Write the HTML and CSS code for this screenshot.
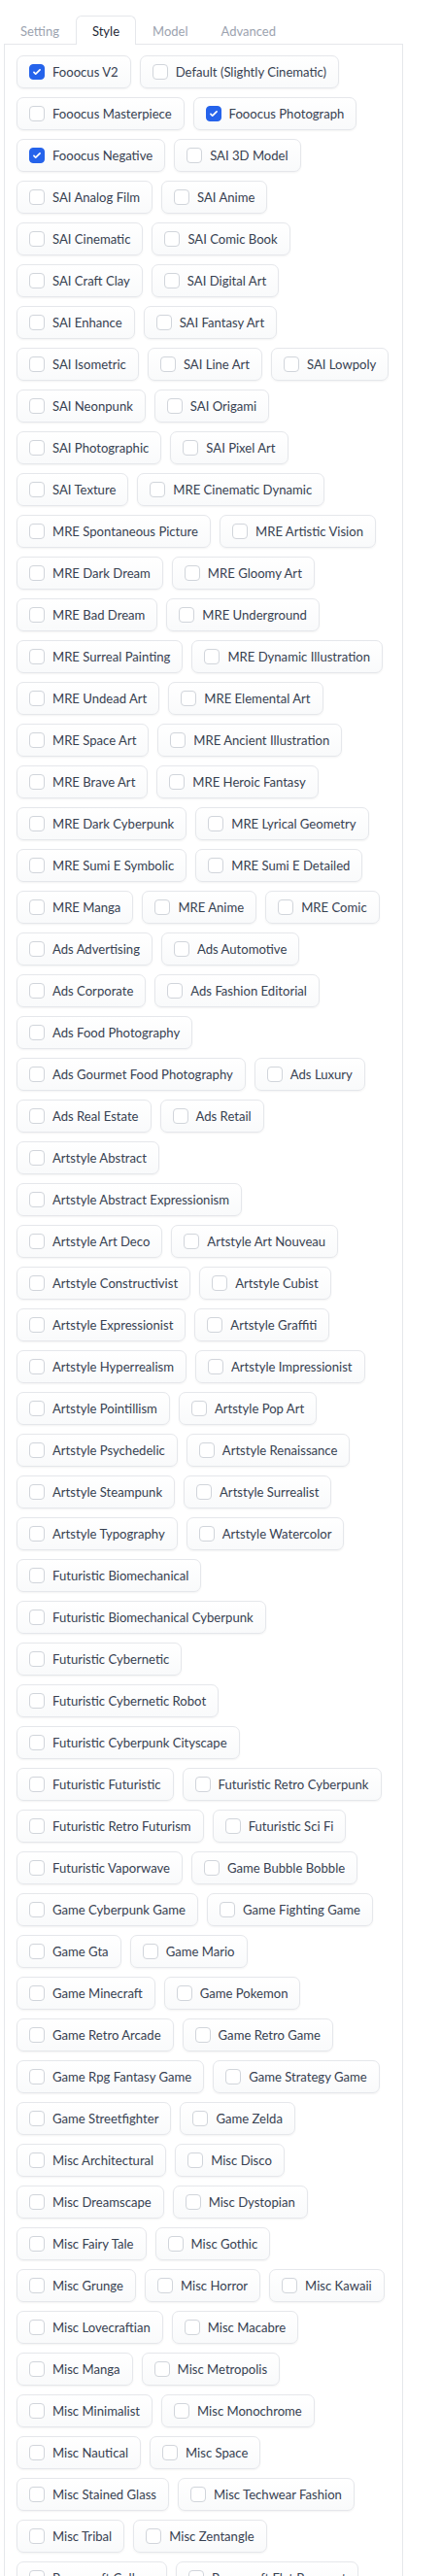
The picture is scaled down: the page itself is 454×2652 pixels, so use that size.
FILE: index.html
```html
<!DOCTYPE html>
<html lang="en">
<head>
<meta charset="utf-8">
<title>Style</title>
<link rel="stylesheet" href="styles.css">
</head>
<body>
<div class="wrap">
  <div class="tabs">
    <button class="tab">Setting</button>
    <button class="tab active">Style</button>
    <button class="tab">Model</button>
    <button class="tab">Advanced</button>
  </div>
  <div class="panel">
    <div class="row">
      <label class="opt"><span class="box on"><svg viewBox="0 0 16 16"><path d="M12.207 4.793a1 1 0 010 1.414l-5 5a1 1 0 01-1.414 0l-2-2a1 1 0 011.414-1.414L6.5 9.086l4.293-4.293a1 1 0 011.414 0z"/></svg></span><span class="txt">Fooocus V2</span></label>
      <label class="opt"><span class="box"></span><span class="txt">Default (Slightly Cinematic)</span></label>
    </div>
    <div class="row">
      <label class="opt"><span class="box"></span><span class="txt">Fooocus Masterpiece</span></label>
      <label class="opt"><span class="box on"><svg viewBox="0 0 16 16"><path d="M12.207 4.793a1 1 0 010 1.414l-5 5a1 1 0 01-1.414 0l-2-2a1 1 0 011.414-1.414L6.5 9.086l4.293-4.293a1 1 0 011.414 0z"/></svg></span><span class="txt">Fooocus Photograph</span></label>
    </div>
    <div class="row">
      <label class="opt"><span class="box on"><svg viewBox="0 0 16 16"><path d="M12.207 4.793a1 1 0 010 1.414l-5 5a1 1 0 01-1.414 0l-2-2a1 1 0 011.414-1.414L6.5 9.086l4.293-4.293a1 1 0 011.414 0z"/></svg></span><span class="txt">Fooocus Negative</span></label>
      <label class="opt"><span class="box"></span><span class="txt">SAI 3D Model</span></label>
    </div>
    <div class="row"><label class="opt"><span class="box"></span><span class="txt">SAI Analog Film</span></label><label class="opt"><span class="box"></span><span class="txt">SAI Anime</span></label></div>
    <div class="row"><label class="opt"><span class="box"></span><span class="txt">SAI Cinematic</span></label><label class="opt"><span class="box"></span><span class="txt">SAI Comic Book</span></label></div>
    <div class="row"><label class="opt"><span class="box"></span><span class="txt">SAI Craft Clay</span></label><label class="opt"><span class="box"></span><span class="txt">SAI Digital Art</span></label></div>
    <div class="row"><label class="opt"><span class="box"></span><span class="txt">SAI Enhance</span></label><label class="opt"><span class="box"></span><span class="txt">SAI Fantasy Art</span></label></div>
    <div class="row"><label class="opt"><span class="box"></span><span class="txt">SAI Isometric</span></label><label class="opt"><span class="box"></span><span class="txt">SAI Line Art</span></label><label class="opt"><span class="box"></span><span class="txt">SAI Lowpoly</span></label></div>
    <div class="row"><label class="opt"><span class="box"></span><span class="txt">SAI Neonpunk</span></label><label class="opt"><span class="box"></span><span class="txt">SAI Origami</span></label></div>
    <div class="row"><label class="opt"><span class="box"></span><span class="txt">SAI Photographic</span></label><label class="opt"><span class="box"></span><span class="txt">SAI Pixel Art</span></label></div>
    <div class="row"><label class="opt"><span class="box"></span><span class="txt">SAI Texture</span></label><label class="opt"><span class="box"></span><span class="txt">MRE Cinematic Dynamic</span></label></div>
    <div class="row"><label class="opt"><span class="box"></span><span class="txt">MRE Spontaneous Picture</span></label><label class="opt"><span class="box"></span><span class="txt">MRE Artistic Vision</span></label></div>
    <div class="row"><label class="opt"><span class="box"></span><span class="txt">MRE Dark Dream</span></label><label class="opt"><span class="box"></span><span class="txt">MRE Gloomy Art</span></label></div>
    <div class="row"><label class="opt"><span class="box"></span><span class="txt">MRE Bad Dream</span></label><label class="opt"><span class="box"></span><span class="txt">MRE Underground</span></label></div>
    <div class="row"><label class="opt"><span class="box"></span><span class="txt">MRE Surreal Painting</span></label><label class="opt"><span class="box"></span><span class="txt">MRE Dynamic Illustration</span></label></div>
    <div class="row"><label class="opt"><span class="box"></span><span class="txt">MRE Undead Art</span></label><label class="opt"><span class="box"></span><span class="txt">MRE Elemental Art</span></label></div>
    <div class="row"><label class="opt"><span class="box"></span><span class="txt">MRE Space Art</span></label><label class="opt"><span class="box"></span><span class="txt">MRE Ancient Illustration</span></label></div>
    <div class="row"><label class="opt"><span class="box"></span><span class="txt">MRE Brave Art</span></label><label class="opt"><span class="box"></span><span class="txt">MRE Heroic Fantasy</span></label></div>
    <div class="row"><label class="opt"><span class="box"></span><span class="txt">MRE Dark Cyberpunk</span></label><label class="opt"><span class="box"></span><span class="txt">MRE Lyrical Geometry</span></label></div>
    <div class="row"><label class="opt"><span class="box"></span><span class="txt">MRE Sumi E Symbolic</span></label><label class="opt"><span class="box"></span><span class="txt">MRE Sumi E Detailed</span></label></div>
    <div class="row"><label class="opt"><span class="box"></span><span class="txt">MRE Manga</span></label><label class="opt"><span class="box"></span><span class="txt">MRE Anime</span></label><label class="opt"><span class="box"></span><span class="txt">MRE Comic</span></label></div>
    <div class="row"><label class="opt"><span class="box"></span><span class="txt">Ads Advertising</span></label><label class="opt"><span class="box"></span><span class="txt">Ads Automotive</span></label></div>
    <div class="row"><label class="opt"><span class="box"></span><span class="txt">Ads Corporate</span></label><label class="opt"><span class="box"></span><span class="txt">Ads Fashion Editorial</span></label></div>
    <div class="row"><label class="opt"><span class="box"></span><span class="txt">Ads Food Photography</span></label></div>
    <div class="row"><label class="opt"><span class="box"></span><span class="txt">Ads Gourmet Food Photography</span></label><label class="opt"><span class="box"></span><span class="txt">Ads Luxury</span></label></div>
    <div class="row"><label class="opt"><span class="box"></span><span class="txt">Ads Real Estate</span></label><label class="opt"><span class="box"></span><span class="txt">Ads Retail</span></label></div>
    <div class="row"><label class="opt"><span class="box"></span><span class="txt">Artstyle Abstract</span></label></div>
    <div class="row"><label class="opt"><span class="box"></span><span class="txt">Artstyle Abstract Expressionism</span></label></div>
    <div class="row"><label class="opt"><span class="box"></span><span class="txt">Artstyle Art Deco</span></label><label class="opt"><span class="box"></span><span class="txt">Artstyle Art Nouveau</span></label></div>
    <div class="row"><label class="opt"><span class="box"></span><span class="txt">Artstyle Constructivist</span></label><label class="opt"><span class="box"></span><span class="txt">Artstyle Cubist</span></label></div>
    <div class="row"><label class="opt"><span class="box"></span><span class="txt">Artstyle Expressionist</span></label><label class="opt"><span class="box"></span><span class="txt">Artstyle Graffiti</span></label></div>
    <div class="row"><label class="opt"><span class="box"></span><span class="txt">Artstyle Hyperrealism</span></label><label class="opt"><span class="box"></span><span class="txt">Artstyle Impressionist</span></label></div>
    <div class="row"><label class="opt"><span class="box"></span><span class="txt">Artstyle Pointillism</span></label><label class="opt"><span class="box"></span><span class="txt">Artstyle Pop Art</span></label></div>
    <div class="row"><label class="opt"><span class="box"></span><span class="txt">Artstyle Psychedelic</span></label><label class="opt"><span class="box"></span><span class="txt">Artstyle Renaissance</span></label></div>
    <div class="row"><label class="opt"><span class="box"></span><span class="txt">Artstyle Steampunk</span></label><label class="opt"><span class="box"></span><span class="txt">Artstyle Surrealist</span></label></div>
    <div class="row"><label class="opt"><span class="box"></span><span class="txt">Artstyle Typography</span></label><label class="opt"><span class="box"></span><span class="txt">Artstyle Watercolor</span></label></div>
    <div class="row"><label class="opt"><span class="box"></span><span class="txt">Futuristic Biomechanical</span></label></div>
    <div class="row"><label class="opt"><span class="box"></span><span class="txt">Futuristic Biomechanical Cyberpunk</span></label></div>
    <div class="row"><label class="opt"><span class="box"></span><span class="txt">Futuristic Cybernetic</span></label></div>
    <div class="row"><label class="opt"><span class="box"></span><span class="txt">Futuristic Cybernetic Robot</span></label></div>
    <div class="row"><label class="opt"><span class="box"></span><span class="txt">Futuristic Cyberpunk Cityscape</span></label></div>
    <div class="row"><label class="opt"><span class="box"></span><span class="txt">Futuristic Futuristic</span></label><label class="opt"><span class="box"></span><span class="txt">Futuristic Retro Cyberpunk</span></label></div>
    <div class="row"><label class="opt"><span class="box"></span><span class="txt">Futuristic Retro Futurism</span></label><label class="opt"><span class="box"></span><span class="txt">Futuristic Sci Fi</span></label></div>
    <div class="row"><label class="opt"><span class="box"></span><span class="txt">Futuristic Vaporwave</span></label><label class="opt"><span class="box"></span><span class="txt">Game Bubble Bobble</span></label></div>
    <div class="row"><label class="opt"><span class="box"></span><span class="txt">Game Cyberpunk Game</span></label><label class="opt"><span class="box"></span><span class="txt">Game Fighting Game</span></label></div>
    <div class="row"><label class="opt"><span class="box"></span><span class="txt">Game Gta</span></label><label class="opt"><span class="box"></span><span class="txt">Game Mario</span></label></div>
    <div class="row"><label class="opt"><span class="box"></span><span class="txt">Game Minecraft</span></label><label class="opt"><span class="box"></span><span class="txt">Game Pokemon</span></label></div>
    <div class="row"><label class="opt"><span class="box"></span><span class="txt">Game Retro Arcade</span></label><label class="opt"><span class="box"></span><span class="txt">Game Retro Game</span></label></div>
    <div class="row"><label class="opt"><span class="box"></span><span class="txt">Game Rpg Fantasy Game</span></label><label class="opt"><span class="box"></span><span class="txt">Game Strategy Game</span></label></div>
    <div class="row"><label class="opt"><span class="box"></span><span class="txt">Game Streetfighter</span></label><label class="opt"><span class="box"></span><span class="txt">Game Zelda</span></label></div>
    <div class="row"><label class="opt"><span class="box"></span><span class="txt">Misc Architectural</span></label><label class="opt"><span class="box"></span><span class="txt">Misc Disco</span></label></div>
    <div class="row"><label class="opt"><span class="box"></span><span class="txt">Misc Dreamscape</span></label><label class="opt"><span class="box"></span><span class="txt">Misc Dystopian</span></label></div>
    <div class="row"><label class="opt"><span class="box"></span><span class="txt">Misc Fairy Tale</span></label><label class="opt"><span class="box"></span><span class="txt">Misc Gothic</span></label></div>
    <div class="row"><label class="opt"><span class="box"></span><span class="txt">Misc Grunge</span></label><label class="opt"><span class="box"></span><span class="txt">Misc Horror</span></label><label class="opt"><span class="box"></span><span class="txt">Misc Kawaii</span></label></div>
    <div class="row"><label class="opt"><span class="box"></span><span class="txt">Misc Lovecraftian</span></label><label class="opt"><span class="box"></span><span class="txt">Misc Macabre</span></label></div>
    <div class="row"><label class="opt"><span class="box"></span><span class="txt">Misc Manga</span></label><label class="opt"><span class="box"></span><span class="txt">Misc Metropolis</span></label></div>
    <div class="row"><label class="opt"><span class="box"></span><span class="txt">Misc Minimalist</span></label><label class="opt"><span class="box"></span><span class="txt">Misc Monochrome</span></label></div>
    <div class="row"><label class="opt"><span class="box"></span><span class="txt">Misc Nautical</span></label><label class="opt"><span class="box"></span><span class="txt">Misc Space</span></label></div>
    <div class="row"><label class="opt"><span class="box"></span><span class="txt">Misc Stained Glass</span></label><label class="opt"><span class="box"></span><span class="txt">Misc Techwear Fashion</span></label></div>
    <div class="row"><label class="opt"><span class="box"></span><span class="txt">Misc Tribal</span></label><label class="opt"><span class="box"></span><span class="txt">Misc Zentangle</span></label></div>
    <div class="row"><label class="opt"><span class="box"></span><span class="txt">Papercraft Collage</span></label><label class="opt"><span class="box"></span><span class="txt">Papercraft Flat Papercut</span></label></div>
    <div class="row"><label class="opt"><span class="box"></span><span class="txt">Papercraft Kirigami</span></label><label class="opt"><span class="box"></span><span class="txt">Papercraft Paper Mache</span></label></div>
  </div>
</div>
</body>
</html>
```
FILE: styles.css
```css
* { box-sizing: border-box; }
html, body { margin: 0; padding: 0; background: #ffffff; }
body {
  font-family: Lato, "Noto Sans", sans-serif;
  color: #374151;
  height: 2652px;
  overflow: hidden;
}
.wrap {
  padding: 16px 0 0 4px;
  width: 415px;
}
.tabs {
  display: flex;
  height: 30px;
  margin-bottom: -1px;
}
.tab {
  position: relative;
  z-index: 1;
  height: 30px;
  padding: 0 16px;
  border: 1px solid transparent;
  border-bottom: none;
  border-radius: 6px 6px 0 0;
  background: transparent;
  font-family: Lato, "Noto Sans", sans-serif;
  font-size: 13px;
  line-height: 28px;
  color: #9ca3af;
  cursor: pointer;
}
.tab.active {
  background: #ffffff;
  border-color: #e5e7eb;
  color: #1f2937;
}
.panel {
  border: 1px solid #e5e7eb;
  border-bottom: none;
  padding: 11px 12px 12px 12px;
  display: flex;
  flex-direction: column;
  gap: 9px;
}
.row {
  display: flex;
  gap: 9px;
}
.opt {
  display: flex;
  align-items: center;
  gap: 8px;
  height: 34px;
  padding: 0 12px;
  border: 1px solid #e5e7eb;
  border-radius: 7px;
  background: linear-gradient(to top, #f9fafb, #ffffff);
  box-shadow: 0 1px 2px rgba(0, 0, 0, 0.05);
  white-space: nowrap;
  cursor: pointer;
}
.box {
  flex: none;
  width: 16px;
  height: 16px;
  border: 1px solid #d1d5db;
  border-radius: 4px;
  background: #ffffff;
  display: flex;
  align-items: center;
  justify-content: center;
}
.box.on {
  background: #2563eb;
  border-color: #2563eb;
}
.box svg {
  width: 16px;
  height: 16px;
  fill: #ffffff;
}
.txt {
  font-size: 13.1px;
  line-height: 18px;
  color: #374151;
}
```
